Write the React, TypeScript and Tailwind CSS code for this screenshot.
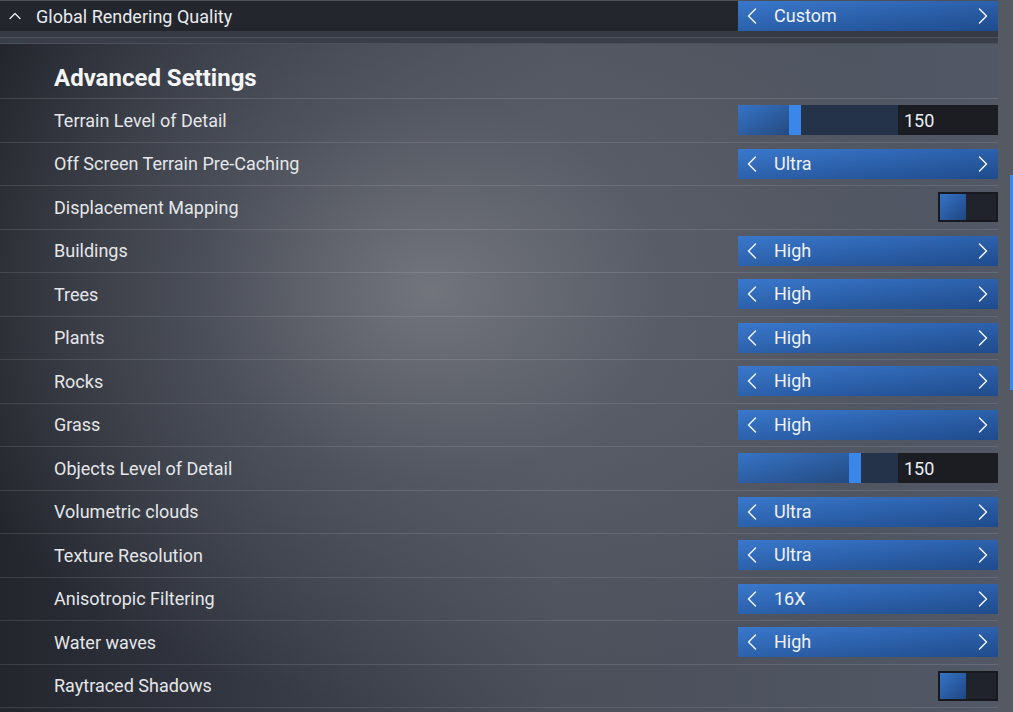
import { ChevronLeft, ChevronRight, ChevronUp } from 'lucide-react';

type Setting =
  | { label: string; kind: 'select'; value: string }
  | { label: string; kind: 'slider'; value: number; pos: number }
  | { label: string; kind: 'toggle'; on: boolean };

const settings: Setting[] = [
  { label: 'Terrain Level of Detail', kind: 'slider', value: 150, pos: 51 },
  { label: 'Off Screen Terrain Pre-Caching', kind: 'select', value: 'Ultra' },
  { label: 'Displacement Mapping', kind: 'toggle', on: true },
  { label: 'Buildings', kind: 'select', value: 'High' },
  { label: 'Trees', kind: 'select', value: 'High' },
  { label: 'Plants', kind: 'select', value: 'High' },
  { label: 'Rocks', kind: 'select', value: 'High' },
  { label: 'Grass', kind: 'select', value: 'High' },
  { label: 'Objects Level of Detail', kind: 'slider', value: 150, pos: 111 },
  { label: 'Volumetric clouds', kind: 'select', value: 'Ultra' },
  { label: 'Texture Resolution', kind: 'select', value: 'Ultra' },
  { label: 'Anisotropic Filtering', kind: 'select', value: '16X' },
  { label: 'Water waves', kind: 'select', value: 'High' },
  { label: 'Raytraced Shadows', kind: 'toggle', on: true },
];

function Selector({ value }: { value: string }) {
  return (
    <div className="flex h-[30px] w-[260px] items-center bg-gradient-to-br from-[#3a78cc] to-[#1f4b8c] text-[#eef2f8]">
      <ChevronLeft size={28} strokeWidth={1.3} className="ml-0 shrink-0" />
      <span className="ml-[8px] flex-1 text-[18px] leading-none">{value}</span>
      <ChevronRight size={28} strokeWidth={1.3} className="mr-[1px] shrink-0" />
    </div>
  );
}

function Slider({ value, pos }: { value: number; pos: number }) {
  return (
    <div className="flex h-[30px] w-[260px]">
      <div className="relative h-full w-[160px] bg-[#243349]">
        <div
          className="absolute left-0 top-0 h-full bg-gradient-to-br from-[#3674c6] to-[#244a82]"
          style={{ width: pos }}
        />
        <div className="absolute top-0 h-full w-[12px] bg-[#3b87e9]" style={{ left: pos }} />
      </div>
      <div className="flex h-full w-[100px] items-center bg-[#1b1d23] pl-[6px] text-[18px] text-[#eceef2]">
        {value}
      </div>
    </div>
  );
}

function Toggle({ on }: { on: boolean }) {
  return (
    <div className="flex h-[30px] w-[60px] border-2 border-[#17191e] bg-[#20232b]">
      {on && <div className="h-full w-[26px] bg-gradient-to-br from-[#3674c6] to-[#1f4682]" />}
    </div>
  );
}

export default function App() {
  return (
    <div
      className="flex h-[712px] w-[1013px] overflow-hidden bg-[radial-gradient(ellipse_520px_420px_at_430px_290px,rgba(122,125,132,0.85)_0%,rgba(100,104,113,0.5)_45%,rgba(80,85,95,0)_100%),linear-gradient(90deg,#23262d_0%,#343843_25%,#4a4f5a_55%,#525865_100%)]"
      style={{ fontFamily: 'Roboto, "Noto Sans", sans-serif' }}
    >
      <div className="flex w-[998px] flex-col">
        {/* Global quality bar */}
        <div className="flex h-[31px] items-center border-t border-[#4b505a] bg-[#23262d] text-[#e8eaee]">
          <ChevronUp size={20} strokeWidth={1.6} className="ml-[5px]" />
          <span className="ml-[11px] flex-1 text-[18px]">Global Rendering Quality</span>
          <Selector value="Custom" />
        </div>
        <div className="h-[6px] bg-[#363a44]" />
        <div className="h-px bg-[#4a4f59]" />
        <div className="h-[5px] bg-[#3a3e48]" />
        <div className="h-px bg-[#4a4f59]" />

        {/* Advanced settings header */}
        <div className="flex h-[55px] items-center border-b border-[#ffffff1f] pl-[54px] pt-[14px]">
          <span className="text-[24px] font-bold text-[#f4f5f7]">Advanced Settings</span>
        </div>

        {settings.map((s) => (
          <div
            key={s.label}
            className="flex h-[43.5px] shrink-0 items-center justify-between border-b border-[#ffffff1c] pl-[54px]"
          >
            <span className="text-[18px] text-[#e4e6ea]">{s.label}</span>
            {s.kind === 'select' && <Selector value={s.value} />}
            {s.kind === 'slider' && <Slider value={s.value} pos={s.pos} />}
            {s.kind === 'toggle' && <Toggle on={s.on} />}
          </div>
        ))}
      </div>

      {/* Scrollbar */}
      <div className="flex w-[15px] justify-end bg-[#545962]">
        <div className="mt-[175px] h-[215px] w-[3px] bg-[#3b87e9]" />
      </div>
    </div>
  );
}
